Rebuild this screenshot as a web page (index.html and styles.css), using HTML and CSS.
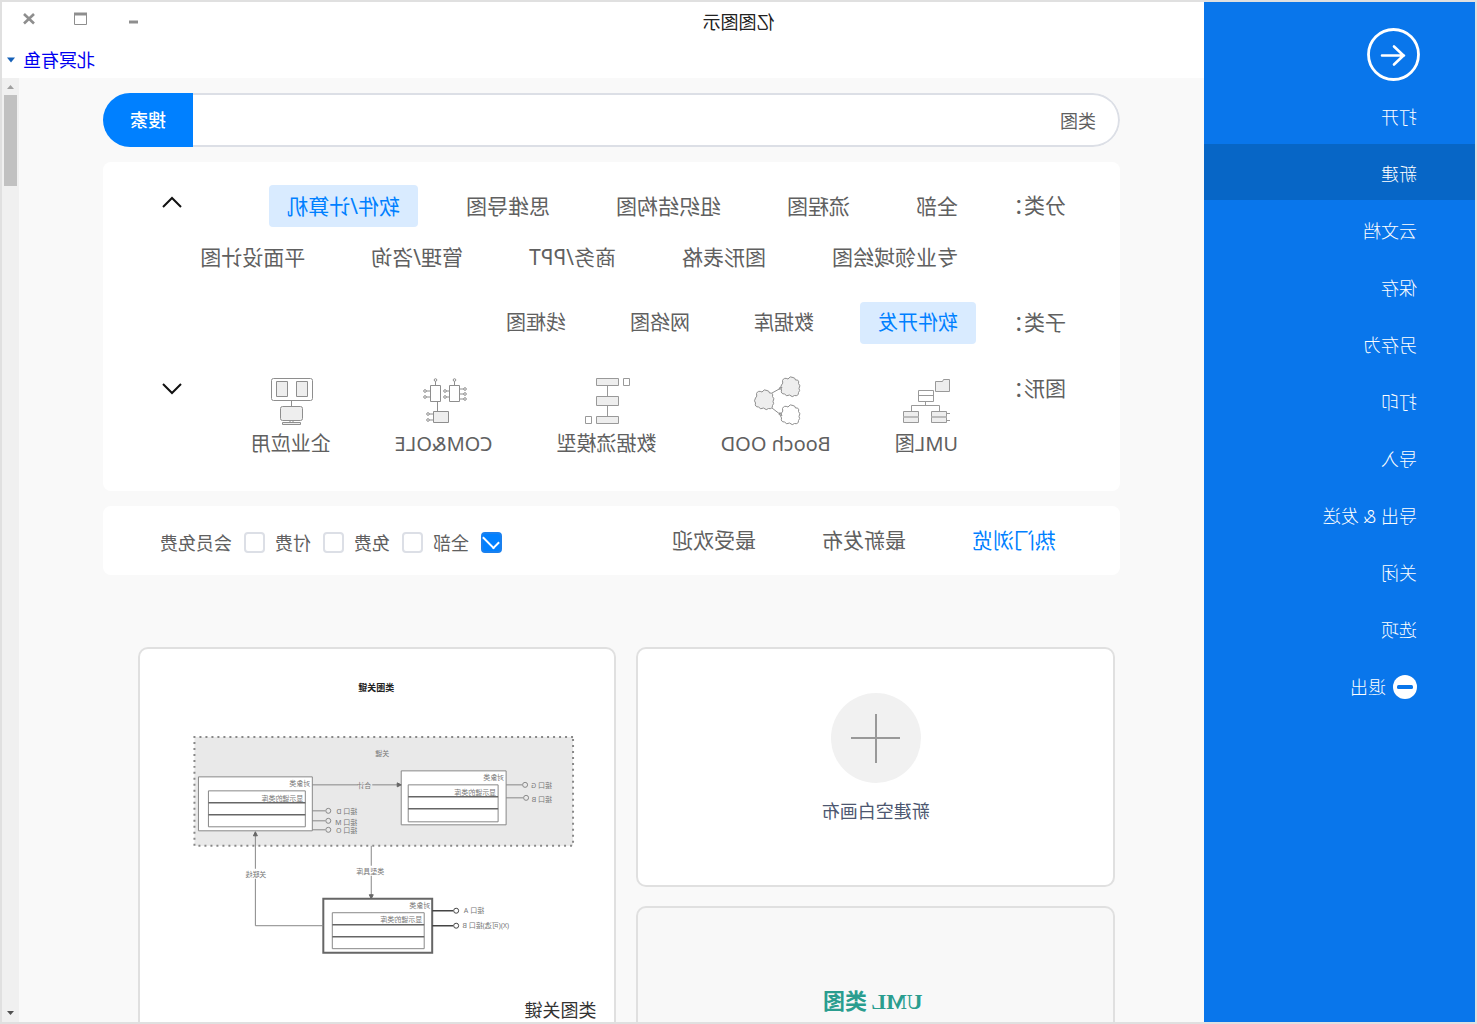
FILE: index.html
```html
<!DOCTYPE html>
<html lang="zh-CN">
<head>
<meta charset="utf-8">
<title>亿图图示</title>
<link rel="stylesheet" href="styles.css">
</head>
<body>
<div class="window">
  <header class="titlebar">
    <h1 class="app-title">亿图图示</h1>
    <div class="window-controls">
      <button type="button" aria-label="最小化"><svg width="16" height="16" viewBox="0 0 16 16"><path d="M3 11h9" stroke="#8e8e8e" stroke-width="3"/></svg></button>
      <button type="button" aria-label="最大化"><svg width="16" height="16" viewBox="0 0 16 16"><path d="M2.500 2.500h12v11h-12z" fill="none" stroke="#8e8e8e"/><path d="M2 3h13" stroke="#8e8e8e" stroke-width="3"/></svg></button>
      <button type="button" aria-label="关闭"><svg width="16" height="16" viewBox="0 0 16 16"><path d="M3 3l10 9.500M13 3L3 12.500" stroke="#8e8e8e" stroke-width="2.600"/></svg></button>
    </div>
  </header>

  <nav class="sidebar">
    <button type="button" class="back" aria-label="返回"><svg width="53" height="53" viewBox="0 0 53 53" fill="none" stroke="#fff"><circle cx="26.500" cy="26.500" r="25" stroke-width="2.800"/><path d="M38 27.500H16M26 18.500l-9.500 9L26 36.500" stroke-width="2.600" stroke-linecap="round" stroke-linejoin="round"/></svg></button>
    <a href="#">打开</a>
    <a href="#" class="active">新建</a>
    <a href="#">云文档</a>
    <a href="#">保存</a>
    <a href="#">另存为</a>
    <a href="#">打印</a>
    <a href="#">导入</a>
    <a href="#">导出 &amp; 发送</a>
    <a href="#">关闭</a>
    <a href="#">选项</a>
    <a href="#"><svg width="24" height="24" viewBox="0 0 24 24"><circle cx="12" cy="12" r="12" fill="#fff"/><rect x="4" y="10" width="16" height="4" rx="1.500" fill="#0976eb"/></svg>退出</a>
  </nav>

  <div class="userbar">
    <a href="#">北冥有鱼</a>
    <svg width="8" height="6" viewBox="0 0 8 6"><path d="M0 0.500h8L4 5.500z" fill="#1560b8"/></svg>
  </div>

  <div class="viewport">
    <main class="content">
      <form class="search">
        <input type="text" value="类图" aria-label="搜索模板">
        <button type="button">搜索</button>
      </form>

      <section class="panel filters">
        <div class="filter-row">
          <span class="label">分类：</span>
          <div class="chip-rows">
            <div class="chips">
              <button type="button">全部</button>
              <button type="button">流程图</button>
              <button type="button">组织结构图</button>
              <button type="button">思维导图</button>
              <button type="button" class="selected">软件/计算机</button>
            </div>
            <div class="chips">
              <button type="button">专业领域绘图</button>
              <button type="button">图形表格</button>
              <button type="button">商务/PPT</button>
              <button type="button">管理/咨询</button>
              <button type="button">平面设计图</button>
            </div>
          </div>
          <button type="button" class="toggle" aria-label="收起"><svg width="20" height="12" viewBox="0 0 20 12"><path d="M1 11l9-9 9 9" fill="none" stroke="#111" stroke-width="2"/></svg></button>
        </div>
        <div class="filter-row">
          <span class="label">子类：</span>
          <div class="chips small">
            <button type="button" class="selected">软件开发</button>
            <button type="button">数据库</button>
            <button type="button">网络图</button>
            <button type="button">线框图</button>
          </div>
        </div>
        <div class="filter-row">
          <span class="label">图形：</span>
          <div class="shapes">
            <button type="button">
              <svg width="50" height="50" viewBox="0 0 50 50" fill="#eee" stroke="#999"><path d="M1.500 3.500h6l1 2h7v10h-14z"/><path d="M17.500 14.500h15v11h-15z" fill="#fff"/><path d="M17.500 19.500h15M25.500 25.500v4M11.500 35v-5.500h28V35" fill="none"/><path d="M4.500 35.500h15v11h-15zM32.500 35.500h15v11h-15z"/><path d="M4.500 41h15M32.500 41h15" stroke-width="2" stroke="#bbb"/><path d="M1 37.500h3M1 44.500h3"/></svg>
              UML图</button>
            <button type="button">
              <svg width="50" height="50" viewBox="0 0 50 50" fill="#eee" stroke="#8e8e8e"><path d="M8 1.500q3-2 5 1.500q4-2 5.500 1.500q-1 3 1 4.500q2 3 0 5q1 4-3 4q-2 3-5 1q-3 3-5 .5q-4 1-4-3q-2-2-.5-4q-2-3 .5-5q-1-4 3-3.500q0-2 2.500-2.500z"/><path d="M8 1.500q3-2 5 1.500q4-2 5.500 1.500q-1 3 1 4.500q2 3 0 5q1 4-3 4q-2 3-5 1q-3 3-5 .5q-4 1-4-3q-2-2-.5-4q-2-3 .5-5q-1-4 3-3.500q0-2 2.500-2.500z" transform="translate(0 28)" fill="#fff"/><path d="M8 1.500q3-2 5 1.500q4-2 5.500 1.500q-1 3 1 4.500q2 3 0 5q1 4-3 4q-2 3-5 1q-3 3-5 .5q-4 1-4-3q-2-2-.5-4q-2-3 .5-5q-1-4 3-3.500q0-2 2.500-2.500z" transform="translate(26 13)"/><path d="M29 17l-9-5M29 32l-9 7"/><path d="M19 11.500l3 .5-1 1.500zM19 39.500l2-3 1 2z"/></svg>
              Booch OOD</button>
            <button type="button">
              <svg width="50" height="50" viewBox="0 0 50 50" fill="#eee" stroke="#999"><path d="M24.500 9v32"/><path d="M13.500 2.500h22v7h-22zM13.500 20.500h22v9h-22zM13.500 40.500h22v7h-22z"/><path d="M2.500 2.500h6v7h-6zM40.500 40.500h6v7h-6z" fill="#fff"/></svg>
              数据流模型</button>
            <button type="button">
              <svg width="50" height="50" viewBox="0 0 50 50" fill="#fff" stroke="#8e8e8e"><path d="M9.500 9.500h10v16h-10zM28.500 9.500h10v16h-10z"/><path d="M20.500 35.500h15v11h-15z" fill="#eee"/><path d="M31.500 25.500v10M14.500 5v4M33.500 5v4M5 13h4M5 18h4M5 23h4M20 15h3M20 21h3M39 15h4M39 21h4M36 38h4M36 44h4"/><circle cx="14.500" cy="4" r="1.300"/><circle cx="33.500" cy="4" r="1.300"/><circle cx="4" cy="13" r="1.300"/><circle cx="4" cy="18" r="1.300"/><circle cx="4" cy="23" r="1.300"/><circle cx="24" cy="15" r="1.300"/><circle cx="24" cy="21" r="1.300"/><circle cx="44" cy="15" r="1.300"/><circle cx="44" cy="21" r="1.300"/><circle cx="41" cy="38" r="1.300"/><circle cx="41" cy="44" r="1.300"/></svg>
              COM&amp;OLE</button>
            <button type="button">
              <svg width="50" height="50" viewBox="0 0 50 50" fill="#eee" stroke="#8e8e8e"><rect x="3.500" y="2.500" width="41" height="22" rx="2" fill="#fff"/><path d="M8.500 5.500h11v15h-11zM28.500 5.500h11v15h-11zM24.500 24.500v6"/><rect x="13.500" y="30.500" width="22" height="14" rx="2"/><path d="M15.500 46.500h18v2h-18zM23 44.500v2M26 44.500v2"/></svg>
              企业应用</button>
          </div>
          <button type="button" class="toggle" aria-label="展开"><svg width="20" height="12" viewBox="0 0 20 12"><path d="M1 1l9 9 9-9" fill="none" stroke="#111" stroke-width="2"/></svg></button>
        </div>
      </section>

      <section class="panel sorting">
        <div class="tabs">
          <a href="#" class="current">热门浏览</a>
          <a href="#">最新发布</a>
          <a href="#">最受欢迎</a>
        </div>
        <div class="checks">
          <label><input type="checkbox" checked>全部</label>
          <label><input type="checkbox">免费</label>
          <label><input type="checkbox">付费</label>
          <label><input type="checkbox">会员免费</label>
        </div>
      </section>

      <section class="gallery">
        <div class="column">
          <button type="button" class="card blank">
            <svg width="90" height="90" viewBox="0 0 90 90"><circle cx="45" cy="45" r="45" fill="#f1f1f1"/><path d="M45 21v49M21 45h49" stroke="#999" stroke-width="2"/></svg>
            新建空白画布
          </button>
          <article class="card uml"><h2>UML 类图</h2></article>
        </div>
        <div class="column">
          <article class="card template">
            <svg class="diagram" viewBox="0 0 475 340" fill="none" stroke="#888">
              <rect x="41" y="88" width="379" height="109" fill="#e9e9e9" stroke-width="2" stroke-dasharray="2 4"/>
              <g fill="#fff">
                <path d="M108 122h105v54H108zM116 136h90v37h-90zM302 128h114v54H302zM309 142h97v36h-97z"/>
                <path d="M182 250h109v54H182z" stroke="#666" stroke-width="2"/>
                <path d="M190 264h92v36h-92z"/>
              </g>
              <path d="M116 148h90M116 160h90M309 154h97M309 166h97M190 276h92M190 288h92" stroke="#666" stroke-width="1.500"/>
              <path d="M92 136h16M91 149h17M213 136h89M289 162h13M289 172h13M289 181h13M291 277h68v-94M243 197v52"/>
              <path d="M161 262h21M161 277h21" stroke="#444" stroke-width="1.500"/>
              <path d="M217 134l-4 2 4 2zM357 187l2-4 2 4zM241 246l2 4 2-4z" fill="#666" stroke="#666"/>
              <circle cx="89" cy="136" r="2.500"/><circle cx="88" cy="149" r="2.500"/>
              <circle cx="286" cy="162" r="2.500"/><circle cx="286" cy="172" r="2.500"/><circle cx="286" cy="181" r="2.500"/>
              <circle cx="158" cy="262" r="2.500" stroke="#444"/><circle cx="158" cy="277" r="2.500" stroke="#444"/>
              <path d="M242 132h14v9h-14z" fill="#e9e9e9" stroke="none"/>
              <path d="M347 220h22v10h-22zM229 217h28v10h-28z" fill="#fff" stroke="none"/>
              <g class="diagram-text">
                <text x="220" y="42" class="diagram-title">类图关键</text>
                <text x="225" y="107">关键</text>
                <text x="110" y="131">对象类</text><text x="118" y="146">显示键的类库</text>
                <text x="304" y="137">对象类</text><text x="311" y="152">显示键的类库</text>
                <text x="184" y="259">对象类</text><text x="192" y="273">显示键的类库</text>
                <text x="62" y="139">接口 G</text><text x="62" y="153">接口 B</text>
                <text x="257" y="165">接口 D</text><text x="257" y="176">接口 M</text><text x="257" y="184">接口 O</text>
                <text x="130" y="264">接口 A</text><text x="105" y="279">(X)(可选)接口 B</text>
                <text x="243" y="139">合计</text><text x="348" y="228">关联线</text><text x="230" y="225">类型具库</text>
              </g>
            </svg>
            <h2>类图关键</h2>
          </article>
        </div>
      </section>
    </main>
    <div class="scrollbar" aria-hidden="true">
      <svg width="17" height="17" viewBox="0 0 17 17"><path d="M5 11h7L8.500 7z" fill="#a0a0a0"/></svg>
      <div class="thumb"></div>
      <svg width="17" height="17" viewBox="0 0 17 17"><path d="M5 6h7l-3.500 4z" fill="#505050"/></svg>
    </div>
  </div>
</div>
</body>
</html>
```
FILE: styles.css
```css
* {
  box-sizing: border-box;
}

body {
  margin: 0;
  overflow: hidden;
  font-family: "Noto Sans", "Noto Sans CJK SC", sans-serif;
  font-size: 18px;
  line-height: 24px;
  color: #606060;
}

button {
  padding: 0;
  border: 0;
  background: none;
  font: inherit;
  color: inherit;
  cursor: pointer;
}

a {
  color: inherit;
  text-decoration: none;
}

svg {
  display: block;
  flex: none;
}

h1,
h2 {
  margin: 0;
  font-size: 18px;
  font-weight: 400;
}

/* The whole window is shown mirrored, left to right. */
.window {
  display: grid;
  grid-template-columns: 271px 1fr;
  grid-template-rows: 40px 36px 1fr;
  height: 100vh;
  border: 2px solid #e0e0e0;
  background: #fff;
  transform: scaleX(-1);
}

.titlebar {
  grid-column: 1 / -1;
  grid-row: 1;
  display: grid;
  grid-template-columns: 1fr auto 1fr;
  align-items: center;
}

.app-title {
  grid-column: 2;
  color: #222;
}

.window-controls {
  display: flex;
  justify-content: flex-end;
  padding: 0 1px 6px 0;
}

.window-controls button {
  display: flex;
  align-items: center;
  justify-content: center;
  width: 52px;
  height: 28px;
}

.sidebar {
  grid-column: 1;
  grid-row: 1 / -1;
  z-index: 1;
  padding-top: 26px;
  background: #0976eb;
  color: #fff;
  font-weight: 300;
}

.back {
  display: block;
  margin: 0 0 6px 55px;
}

.sidebar a {
  display: flex;
  align-items: center;
  gap: 7px;
  height: 56px;
  margin-bottom: 1px;
  padding: 3px 0 0 58px;
}

.sidebar .active {
  background: #0766c6;
}

.userbar {
  grid-column: 2;
  display: flex;
  align-items: center;
  justify-content: flex-end;
  gap: 8px;
  padding-right: 5px;
  color: #0000f0;
}

.viewport {
  grid-column: 2;
  display: flex;
  min-height: 0;
  overflow: hidden;
  background: #f9f9f9;
}

.content {
  flex: 1;
  min-width: 0;
  padding: 15px 84px 0;
}

.scrollbar {
  display: flex;
  flex-direction: column;
  width: 17px;
  background: #f0f0f0;
}

.thumb {
  height: 91px;
  margin: 0 2px auto;
  background: #c1c1c1;
}

.search {
  display: flex;
  height: 54px;
  border-radius: 27px;
  overflow: hidden;
}

.search input {
  flex: 1;
  min-width: 0;
  padding: 2px 22px 0;
  border: 2px solid #dcdfe6;
  border-right: 0;
  border-radius: 27px 0 0 27px;
  background: #fff;
  font: inherit;
  color: inherit;
}

.search button {
  width: 90px;
  background: #0080ff;
  color: #fff;
  font-weight: 500;
}

.panel {
  margin-top: 15px;
  border-radius: 8px;
  background: #fff;
}

.filters {
  display: flex;
  flex-direction: column;
  gap: 24px;
  padding: 23px 59px 33px 54px;
  font-size: 21px;
}

.filter-row {
  display: flex;
}

.label {
  flex: none;
  width: 90px;
  line-height: 40px;
}

.chip-rows {
  display: flex;
  flex-direction: column;
  flex: 1;
  min-width: 0;
  gap: 9px;
}

.chips {
  display: flex;
  gap: 30px;
}

.chips button {
  flex: none;
  height: 42px;
  padding: 0 18px;
  border-radius: 4px;
  line-height: 40px;
}

.chips .selected {
  background: #d9ebff;
  color: #0080ff;
}

.small,
.shapes {
  gap: 28px;
  font-size: 20px;
}

.shapes {
  display: flex;
  flex: 1;
  min-width: 0;
  padding-top: 8px;
}

.shapes button {
  display: flex;
  flex-direction: column;
  align-items: center;
  gap: 4px;
  padding: 0 18px;
  line-height: 28px;
  white-space: nowrap;
}

.toggle {
  display: flex;
  align-items: center;
  flex: none;
  width: 20px;
  height: 34px;
}

.shapes + .toggle {
  height: 42px;
}

.sorting {
  display: flex;
  align-items: center;
  justify-content: space-between;
  height: 69px;
  padding: 0 57px 0 64px;
}

.tabs {
  display: flex;
  gap: 66px;
  padding-bottom: 2px;
  font-size: 21px;
}

.current {
  color: #0080ff;
}

.checks {
  display: flex;
  gap: 10px;
  padding-top: 4px;
}

.checks label {
  display: flex;
  align-items: center;
  gap: 12px;
}

.checks input {
  appearance: none;
  width: 21px;
  height: 21px;
  margin: 0;
  border: 2px solid #dcdfe6;
  border-radius: 4px;
  background: #fff;
}

.checks input:checked {
  display: grid;
  place-items: center;
  border-color: #1a80ee;
  background: #0080ff;
}

.checks input:checked::before {
  content: "";
  width: 14px;
  height: 7px;
  margin-bottom: 4px;
  border: solid #fff;
  border-width: 0 0 2px 2px;
  transform: rotate(-45deg);
}

.gallery {
  display: flex;
  gap: 20px;
  padding: 72px 35px 0 5px;
}

.column {
  display: flex;
  flex: 1;
  flex-direction: column;
  gap: 19px;
  min-width: 0;
}

.card {
  border: 2px solid #e0e0e0;
  border-radius: 10px;
  background: #fff;
}

.blank {
  display: flex;
  flex-direction: column;
  align-items: center;
  gap: 16px;
  height: 240px;
  padding-top: 44px;
  color: #4d5770;
}

.uml {
  height: 240px;
  padding: 80px 0 0 6px;
  background: #f8f8f8;
  text-align: center;
}

.uml h2 {
  color: #2a9d8f;
  font-family: "Liberation Serif", "Noto Sans CJK SC", serif;
  font-size: 22px;
  font-weight: 700;
  line-height: 28px;
}

.template {
  padding-bottom: 18px;
}

.template h2 {
  padding: 9px 18px 0;
  color: #333;
}

.diagram {
  width: 100%;
}

.diagram-text {
  fill: #777;
  stroke: none;
  font-size: 7px;
}

.diagram-title {
  fill: #222;
  font-size: 9px;
  font-weight: 700;
}
```
